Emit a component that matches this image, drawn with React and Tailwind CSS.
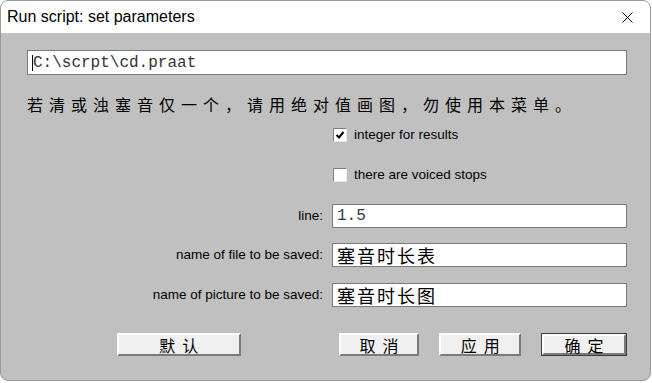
import { X } from "lucide-react";

const sans = { fontFamily: '"Liberation Sans", Arial, sans-serif' };
const cjk = { fontFamily: '"Noto Sans CJK SC", "Noto Sans", sans-serif' };
const mono = { fontFamily: '"Liberation Mono", "Courier New", monospace' };

function Check({ checked, label }) {
  return (
    <div className="flex items-center h-[20px] pl-[306px]">
      <div className="w-[14px] h-[14px] bg-white border border-t-[#808080] border-l-[#808080] border-b-[#e8e8e8] border-r-[#e8e8e8] flex items-center justify-center">
        {checked && (
          <svg width="10" height="10" viewBox="0 0 10 10">
            <path d="M1.5 5 L4 7.5 L8.5 2" fill="none" stroke="#000" strokeWidth="2" />
          </svg>
        )}
      </div>
      <span className="ml-[7px] text-[13.5px] text-black leading-none" style={sans}>
        {label}
      </span>
    </div>
  );
}

function Field({ label, value, isMono, className }) {
  return (
    <div className={"flex items-center h-[24px] " + className}>
      <div className="w-[296px] text-right text-[13.5px] text-black" style={sans}>
        {label}
      </div>
      <div className="ml-[9px] flex-1 h-[24px] bg-white border border-[#7a7a7a] flex items-center pl-[4px]">
        {isMono ? (
          <span className="text-[16px] text-[#2b3a4a]" style={mono}>{value}</span>
        ) : (
          <span className="text-[18px] tracking-[2px] text-black leading-none" style={cjk}>{value}</span>
        )}
      </div>
    </div>
  );
}

function Btn({ children, className, isDefault }) {
  return (
    <div className={"h-[23px] " + (isDefault ? "border border-[#3c3c3c] " : "") + className}>
      <div className="h-full w-full bg-[#f0f0f0] border-2 border-t-white border-l-white border-b-[#7a7a7a] border-r-[#7a7a7a] flex items-center justify-center">
        <span className="text-[16px] tracking-[7px] pl-[7px] text-black leading-none" style={cjk}>
          {children}
        </span>
      </div>
    </div>
  );
}

export default function App() {
  return (
    <div className="w-[652px] h-[383px] bg-white">
      <div className="w-[651px] h-[381px] rounded-[8px] border border-[#9a9a9a] overflow-hidden flex flex-col bg-[#c0c0c0]">
        {/* Title bar */}
        <div className="h-[32px] bg-white flex items-center justify-between pl-[6px] pr-[13px]">
          <span className="text-[16px] text-black" style={sans}>Run script: set parameters</span>
          <X className="w-[19px] h-[19px] text-black" strokeWidth={1.2} />
        </div>

        {/* Body */}
        <div className="flex-1 flex flex-col pl-[26px] pr-[23px] pt-[17px]">
          <div className="h-[25px] bg-white border border-[#7a7a7a] flex items-center pl-[4px]">
            <span className="w-[1px] h-[16px] bg-black" />
            <span className="text-[16px] text-[#333]" style={mono}>C:\scrpt\cd.praat</span>
          </div>

          <div className="mt-[17px] h-[24px] flex items-center">
            <span className="text-[16px] tracking-[6px] text-black" style={cjk}>
              若清或浊塞音仅一个，请用绝对值画图，勿使用本菜单。
            </span>
          </div>

          <div className="mt-[9px]">
            <Check checked label="integer for results" />
          </div>
          <div className="mt-[20px]">
            <Check label="there are voiced stops" />
          </div>

          <Field className="mt-[19px]" label="line:" value="1.5" isMono />
          <Field className="mt-[15px]" label="name of file to be saved:" value="塞音时长表" />
          <Field className="mt-[16px]" label="name of picture to be saved:" value="塞音时长图" />

          <div className="mt-[26px] flex">
            <Btn className="ml-[90px] w-[124px]">默认</Btn>
            <Btn className="ml-[98px] w-[81px]">取消</Btn>
            <Btn className="ml-[20px] w-[82px]">应用</Btn>
            <Btn className="ml-[20px] w-[86px]" isDefault>确定</Btn>
          </div>
        </div>
      </div>
    </div>
  );
}
